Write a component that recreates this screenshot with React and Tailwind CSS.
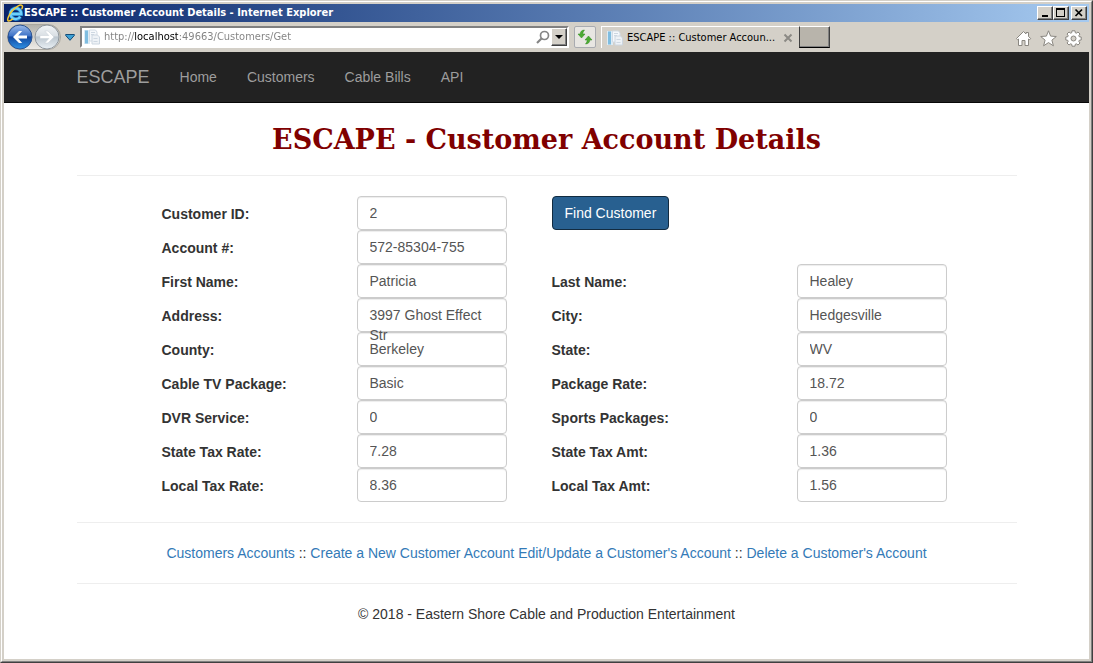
import React from "react";

const NAV = ["Home", "Customers", "Cable Bills", "API"];

const ROWS = [
  [["Customer ID:", "2"], null],
  [["Account #:", "572-85304-755"], null],
  [["First Name:", "Patricia"], ["Last Name:", "Healey"]],
  [["Address:", "3997 Ghost Effect Str"], ["City:", "Hedgesville"]],
  [["County:", "Berkeley"], ["State:", "WV"]],
  [["Cable TV Package:", "Basic"], ["Package Rate:", "18.72"]],
  [["DVR Service:", "0"], ["Sports Packages:", "0"]],
  [["State Tax Rate:", "7.28"], ["State Tax Amt:", "1.36"]],
  [["Local Tax Rate:", "8.36"], ["Local Tax Amt:", "1.56"]],
];

const BOX =
  "block h-[34px] w-[150px] rounded-[4px] border border-[#ccc] px-3 py-[6px] text-sm leading-5 text-[#555] shadow-[inset_0_1px_1px_rgba(0,0,0,0.075)]";

function slug(label) {
  return label.toLowerCase().replace(/[^a-z]+/g, "-");
}

function Field({ label, value }) {
  const id = slug(label);
  return (
    <>
      <label htmlFor={id} className="pt-2 text-sm leading-5 font-bold text-[#333]">
        {label}
      </label>
      {label === "Address:" ? (
        <output id={id} className={`${BOX} relative z-10`}>
          {value}
        </output>
      ) : (
        <input id={id} type="text" defaultValue={value} readOnly={label !== "Customer ID:"} className={`${BOX} bg-white outline-none`} />
      )}
    </>
  );
}

function IeLogo() {
  return (
    <svg width="18" height="18" viewBox="0 0 18 18" className="shrink-0" fill="none" aria-hidden="true">
      <path d="M5 10H15.200A5.400 5.400 0 1 0 14.300 12.700" stroke="#1f7fc4" strokeWidth="3.800" />
      <path d="M5 10H15.200A5.400 5.400 0 1 0 14.300 12.700" stroke="#6fd0fa" strokeWidth="2.400" />
      <path d="M6.500 15.200C4.300 16.900 2.600 17.400 2 16.700 1 15.500 2.700 10.700 6.500 6.500 10 2.600 14.200.4 15.800 1.300c.9.5.8 1.900.1 3.400" stroke="#f7c92f" strokeWidth="1.500" strokeLinecap="round" />
    </svg>
  );
}

function TravelButtons() {
  return (
    <div className="flex h-[26px] w-[54px] items-center justify-between rounded-full border border-[#aaa79f] bg-linear-to-b from-[#b4b2ac] via-[#d2d0ca] to-[#eceae6]">
      <button type="button" aria-label="Back">
        <svg width="26" height="26" viewBox="0 0 26 26" className="-ml-px block">
          <defs>
            <linearGradient id="back" x1="0" y1="0" x2="0" y2="1">
              <stop offset="0" stopColor="#9dbbe9" />
              <stop offset="0.450" stopColor="#3e73c8" />
              <stop offset="0.500" stopColor="#12479f" />
              <stop offset="1" stopColor="#2f93e6" />
            </linearGradient>
          </defs>
          <circle cx="13" cy="13" r="12" fill="url(#back)" stroke="#2a5291" />
          <path d="M6 13l6-6h3.200L11.200 11.500H20v3h-8.800l4 4.500H12z" fill="#fff" />
        </svg>
      </button>
      <button type="button" aria-label="Forward">
        <svg width="26" height="26" viewBox="0 0 26 26" className="block">
          <defs>
            <linearGradient id="forward" x1="0" y1="0" x2="0" y2="1">
              <stop offset="0" stopColor="#f3f5f7" />
              <stop offset="0.450" stopColor="#d9dfe4" />
              <stop offset="0.500" stopColor="#bcc6cf" />
              <stop offset="1" stopColor="#eaf0f5" />
            </linearGradient>
          </defs>
          <circle cx="13" cy="13" r="12" fill="url(#forward)" stroke="#8f969d" />
          <path d="M20 13l-6-6h-3.200l4 4.500H6v3h8.800l-4 4.500H14z" fill="#fff" stroke="#c6ced6" strokeWidth="0.500" />
        </svg>
      </button>
    </div>
  );
}

function PageIcon() {
  return (
    <svg width="16" height="16" viewBox="0 0 16 16" className="shrink-0" aria-hidden="true">
      <path d="M0 1h6v14H0z" fill="#dcebf5" />
      <path d="M1 1.500h3v13H1z" fill="#7fbde0" />
      <path d="M5.500 1h6l1.500 2v9H5.500z" fill="#f5f8fb" stroke="#d3dce5" />
      <path d="M8 6h5.500l2 2v7H8z" fill="#eef2f6" stroke="#ccd6e0" />
      <path d="M7 3.500h4M7 5.500h3M9.500 9.500h4M9.500 12.500h4" stroke="#cdd7e1" />
    </svg>
  );
}

function Refresh() {
  return (
    <svg width="16" height="16" viewBox="0 0 16 16" aria-hidden="true">
      <path d="M7.500 1C4.600 1.200 3.200 2.600 3.200 5H1l3.500 4L8 5H5.800c0-1.500.6-2.700 1.700-4z" fill="#4dab32" stroke="#2c8a1c" strokeWidth="0.500" />
      <path d="M8.500 15c2.900-.2 4.300-1.600 4.300-4H15l-3.500-4L8 11h2.200c0 1.500-.6 2.700-1.700 4z" fill="#4dab32" stroke="#2c8a1c" strokeWidth="0.500" />
    </svg>
  );
}

const RAISED =
  "flex items-center justify-center border border-t-white border-l-white border-r-[#404040] border-b-[#404040] bg-[#d4d0c8] shadow-[inset_-1px_-1px_0_#808080]";

function TitleBar() {
  return (
    <header className="flex h-[18px] items-center bg-linear-to-r from-[#0a246a] to-[#a6caf0] pr-[2px] pl-[2px] text-white">
      <IeLogo />
      <span className="flex-1 truncate font-['DejaVu_Sans_Condensed','DejaVu_Sans',sans-serif] text-[11px] leading-[18px] font-bold">
        ESCAPE :: Customer Account Details - Internet Explorer
      </span>
      <div className="flex h-[14px]">
        <button type="button" aria-label="Minimize" className={`${RAISED} w-4`}>
          <svg width="12" height="10" viewBox="0 0 12 10">
            <path d="M3 7h6v2H3z" />
          </svg>
        </button>
        <button type="button" aria-label="Maximize" className={`${RAISED} w-4`}>
          <svg width="12" height="10" viewBox="0 0 12 10" shapeRendering="crispEdges">
            <path d="M1 0h9v9H1zM2 2v6h7V2z" fillRule="evenodd" />
          </svg>
        </button>
        <button type="button" aria-label="Close" className={`${RAISED} ml-[2px] w-4`}>
          <svg width="12" height="10" viewBox="0 0 12 10">
            <path d="M2.500 1.500l6.500 6.500M9 1.500L2.500 8" stroke="#000" strokeWidth="1.700" />
          </svg>
        </button>
      </div>
    </header>
  );
}

function ToolBar() {
  return (
    <div className="flex h-[30px] items-center bg-[#d4d0c8] pl-[3px] font-['DejaVu_Sans_Condensed','DejaVu_Sans',sans-serif]">
      <TravelButtons />
      <button type="button" aria-label="Recent pages" className="ml-1">
        <svg width="10" height="7" viewBox="0 0 10 7" className="block">
          <path d="M.7.500h8.600v1L5 6.300.7 1.500z" fill="#3da0d4" stroke="#154c77" />
        </svg>
      </button>
      <div className="ml-[5px] flex h-[22px] w-[489px] items-center border-2 border-t-[#808080] border-r-white border-b-white border-l-[#808080] bg-white pl-[2px]">
        <PageIcon />
        <input
          type="text"
          aria-label="Address"
          defaultValue="http://localhost:49663/Customers/Get"
          className="ml-1 min-w-0 flex-1 bg-[linear-gradient(90deg,#808080_30px,#000_30px,#000_74px,#808080_74px)] bg-clip-text text-[11px] leading-[18px] text-transparent outline-none"
        />
        <button type="button" aria-label="Search">
          <svg width="14" height="14" viewBox="0 0 14 14" className="block" fill="none" stroke="#858585">
            <circle cx="8.500" cy="5.500" r="4" strokeWidth="1.700" />
            <path d="M5.500 8.500L1 13" strokeWidth="2.200" />
          </svg>
        </button>
        <button type="button" aria-label="Show address list" className={`${RAISED} ml-px h-[18px] w-4`}>
          <svg width="8" height="4" viewBox="0 0 8 4">
            <path d="M0 0h8L4 4z" />
          </svg>
        </button>
      </div>
      <button type="button" aria-label="Refresh" className="ml-[5px] flex h-[22px] w-[22px] items-center justify-center rounded-[2px] border border-[#a9abb0] bg-[#e8e6e2]">
        <Refresh />
      </button>
      <div className="ml-[5px] flex h-[22px] w-[198px] items-center border-t border-l border-white pl-[5px]">
        <PageIcon />
        <span className="ml-1 w-[150px] truncate text-[11px] leading-5 text-black">ESCAPE :: Customer Accoun...</span>
        <button type="button" aria-label="Close tab" className="ml-[6px]">
          <svg width="10" height="10" viewBox="0 0 10 10" className="block">
            <path d="M1.500 1.500l7 7M8.500 1.500l-7 7" stroke="#8c8a85" strokeWidth="2" />
          </svg>
        </button>
      </div>
      <button type="button" aria-label="New tab" className="h-[22px] w-[31px] border border-t-white border-r-[#404040] border-b-black border-l-[#404040] bg-[#b8b4ab] shadow-[inset_-1px_-1px_0_#808080]" />
      <div className="ml-auto flex items-center gap-2 pt-[2px] pr-[7px]">
        <button type="button" aria-label="Home page">
          <svg width="17" height="17" viewBox="0 0 17 17" className="block" fill="#fff" stroke="#8a8781">
            <path d="M1.500 8.500L8.500 1.500l2.500 2.500V2.500h2.500v4L15.700 8.500l-1 1.200-1.200-.7v6.500H10V10.500H7v5H3.500V9l-1 .7z" />
          </svg>
        </button>
        <button type="button" aria-label="Favorites">
          <svg width="17" height="17" viewBox="0 0 17 17" className="block" fill="#fff" stroke="#8a8781">
            <path d="M8.500.8l2.100 5.300 5.700.4-4.400 3.600 1.500 5.700-4.900-3.200-4.900 3.200 1.500-5.700L.7 6.500l5.700-.4z" />
          </svg>
        </button>
        <button type="button" aria-label="Tools">
          <svg width="17" height="17" viewBox="0 0 17 17" className="block" fill="#fff" stroke="#8a8781">
            <path d="M7 .8h3l.3 2 1 .4 1.700-1.200 2 2-1.200 1.700.4 1 2 .3v3l-2 .3-.4 1 1.200 1.700-2 2-1.700-1.200-1 .4-.3 2H7l-.3-2-1-.4L4 15l-2-2 1.200-1.700-.4-1-2-.3V7l2-.3.4-1L2 4l2-2 1.700 1.200 1-.4z" />
            <circle cx="8.500" cy="8.500" r="2.500" fill="#d4d0c8" />
          </svg>
        </button>
      </div>
    </div>
  );
}

function Rule() {
  return <hr className="my-5 border-t border-[#eee]" />;
}

export default function App() {
  return (
    <div className="flex min-h-screen flex-col border border-t-[#d4d0c8] border-r-[#404040] border-b-[#404040] border-l-[#d4d0c8] font-['Liberation_Sans',Arial,sans-serif]">
      <div className="flex flex-1 flex-col border border-t-white border-r-[#808080] border-b-[#808080] border-l-white">
        <div className="flex flex-1 flex-col border-2 border-[#d4d0c8] bg-white">
          <TitleBar />
          <ToolBar />
          <nav className="border-b border-[#080808] bg-[#222]">
            <div className="mx-auto flex h-[50px] max-w-[940px] items-center text-[#9d9d9d]">
              <a href="#top" className="mr-[30px] text-lg leading-5">
                ESCAPE
              </a>
              <div className="flex gap-[30px] text-sm leading-5">
                {NAV.map((item) => (
                  <a key={item} href={`#${slug(item)}`}>
                    {item}
                  </a>
                ))}
              </div>
            </div>
          </nav>
          <main className="mx-auto w-full max-w-[940px] text-sm leading-5 text-[#333]">
            <h1 className="pt-[22px] text-center font-['DejaVu_Serif',serif] text-[27px] leading-[30px] font-bold text-[#800000]">
              ESCAPE - Customer Account Details
            </h1>
            <Rule />
            <form className="flex flex-col pr-[70px] pl-[85px]" onSubmit={(e) => e.preventDefault()}>
              {ROWS.map(([left, right], i) => (
                <div key={left[0]} className="grid grid-cols-[195fr_195fr_245fr_150fr]">
                  <Field label={left[0]} value={left[1]} />
                  {right && <Field label={right[0]} value={right[1]} />}
                  {i === 0 && (
                    <button type="submit" className="h-[34px] justify-self-start rounded-[4px] border border-[#122b40] bg-[#286090] px-3 text-sm leading-5 text-white">
                      Find Customer
                    </button>
                  )}
                </div>
              ))}
            </form>
            <Rule />
            <p className="text-center">
              <a href="#accounts" className="text-[#337ab7]">Customers Accounts</a> ::{" "}
              <a href="#create" className="text-[#337ab7]">Create a New Customer Account</a>{" "}
              <a href="#edit" className="text-[#337ab7]">Edit/Update a Customer's Account</a> ::{" "}
              <a href="#delete" className="text-[#337ab7]">Delete a Customer's Account</a>
            </p>
            <Rule />
            <footer className="text-center">© 2018 - Eastern Shore Cable and Production Entertainment</footer>
          </main>
        </div>
      </div>
    </div>
  );
}
